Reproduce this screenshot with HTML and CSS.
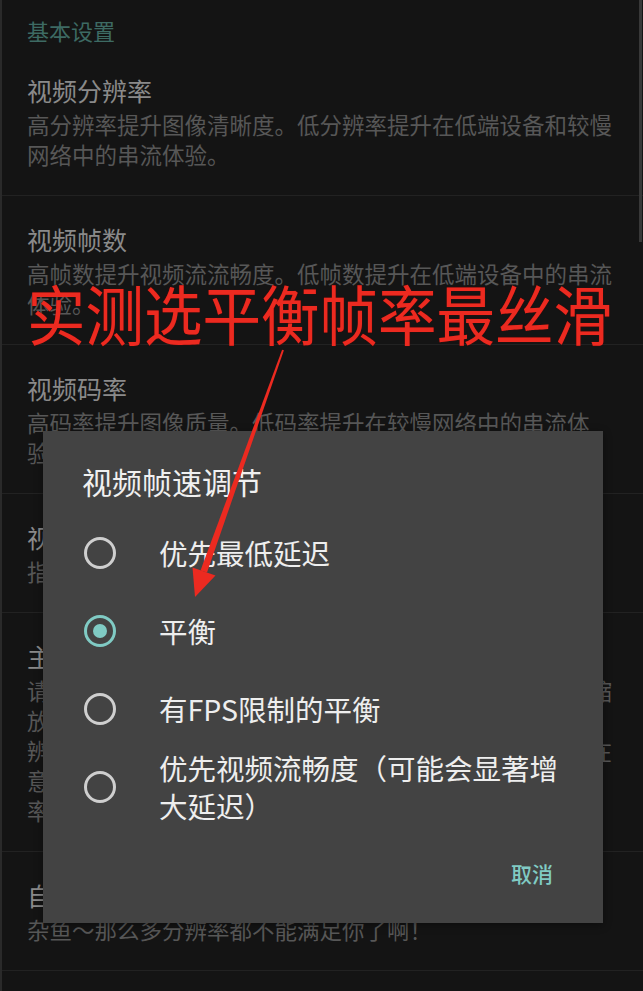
FILE: index.html
```html
<!DOCTYPE html>
<html lang="zh-CN">
<head>
<meta charset="utf-8">
<title>设置</title>
<link rel="stylesheet" href="styles.css">
</head>
<body>
<div class="screen">
  <div class="settings">
    <div class="category">基本设置</div>
    <div class="pref">
      <div class="pref-title">视频分辨率</div>
      <div class="pref-summary">高分辨率提升图像清晰度。低分辨率提升在低端设备和较慢网络中的串流体验。</div>
    </div>
    <div class="pref">
      <div class="pref-title">视频帧数</div>
      <div class="pref-summary">高帧数提升视频流流畅度。低帧数提升在低端设备中的串流体验。</div>
    </div>
    <div class="pref">
      <div class="pref-title">视频码率</div>
      <div class="pref-summary">高码率提升图像质量。低码率提升在较慢网络中的串流体验。</div>
    </div>
    <div class="pref">
      <div class="pref-title">视频帧速调节</div>
      <div class="pref-summary">指定串流时的帧速调节策略</div>
    </div>
    <div class="pref">
      <div class="pref-title">主机端缩放</div>
      <div class="pref-summary">请先确认客户端的解码性能足够，开启后主机端将按比例缩<br>放渲染画面以匹配客户端屏幕，可降低带宽占用。高分<br>辨率下画面更清晰，低分辨率下串流更加流畅。启用后请在<br>意部分应用可能不支持动态调整分辨<br>率，如遇黑屏请降低码率或关闭此选项。</div>
    </div>
    <div class="pref">
      <div class="pref-title">自定义分辨率</div>
      <div class="pref-summary">杂鱼～那么多分辨率都不能满足你了啊！</div>
    </div>
  </div>

  <div class="scrollbar"></div>

  <div class="dialog">
    <div class="dialog-title">视频帧速调节</div>
    <div class="options">
      <div class="option">
        <span class="radio"></span>
        <span class="option-text">优先最低延迟</span>
      </div>
      <div class="option">
        <span class="radio checked"></span>
        <span class="option-text">平衡</span>
      </div>
      <div class="option">
        <span class="radio"></span>
        <span class="option-text">有FPS限制的平衡</span>
      </div>
      <div class="option">
        <span class="radio"></span>
        <span class="option-text">优先视频流畅度（可能会显著增大延迟）</span>
      </div>
    </div>
    <div class="dialog-actions">
      <span class="btn">取消</span>
    </div>
  </div>

  <div class="annotation">实测选平衡帧率最丝滑</div>
  <svg class="arrow" width="643" height="991" viewBox="0 0 643 991">
    <polygon points="283.9,350.3 282.1,349.7 200.5,570.5 207,572.5" fill="#ec2a20"/>
    <polygon points="195,597 192.5,567.5 215.5,575.5" fill="#ec2a20"/>
  </svg>
</div>
</body>
</html>
```

FILE: styles.css
```css
* {
  box-sizing: border-box;
}

html, body {
  margin: 0;
  padding: 0;
  background: #141414;
}

body {
  font-family: "Noto Sans CJK SC", "Noto Sans", sans-serif;
}

.screen {
  position: relative;
  width: 643px;
  height: 991px;
  overflow: hidden;
  background: #141414;
  border-left: 2px solid #2a2a2a;
}

.settings {
  display: flex;
  flex-direction: column;
}

.category {
  padding: 15px 0 0 25px;
  height: 47px;
  font-size: 22px;
  line-height: 30px;
  color: #3d6a63;
}

.pref {
  padding: 29px 24px 26px 25px;
  border-bottom: 1px solid #222222;
}

.pref-title {
  font-size: 25px;
  line-height: 28px;
  margin-bottom: 5px;
  color: #8a8a8a;
}

.pref-summary {
  font-size: 22.5px;
  line-height: 30px;
  color: #575757;
}

.scrollbar {
  position: absolute;
  top: 0;
  right: 1px;
  width: 3px;
  height: 242px;
  background: #383838;
}

.dialog {
  position: absolute;
  top: 431px;
  left: 41px;
  width: 560px;
  background: #434343;
  padding: 32px 0 30px 0;
  box-shadow: 0 2px 8px rgba(0, 0, 0, 0.4);
}

.dialog-title {
  margin-left: 39px;
  font-size: 30px;
  line-height: 36px;
  color: #f0f0f0;
}

.options {
  margin-top: 15px;
  display: flex;
  flex-direction: column;
}

.option {
  display: flex;
  align-items: center;
  min-height: 78px;
  padding: 0 30px 0 41px;
}

.radio {
  flex: none;
  width: 32px;
  height: 32px;
  border-radius: 50%;
  border: 3px solid #cfcfcf;
  margin-right: 43px;
  display: flex;
  align-items: center;
  justify-content: center;
}

.radio.checked {
  border-color: #80cbc4;
}

.radio.checked::after {
  content: "";
  width: 14px;
  height: 14px;
  border-radius: 50%;
  background: #80cbc4;
}

.option-text {
  font-size: 28.5px;
  line-height: 38px;
  color: #eeeeee;
}

.dialog-actions {
  margin-top: 27px;
  display: flex;
  justify-content: flex-end;
  padding-right: 50px;
}

.btn {
  font-size: 21px;
  line-height: 40px;
  font-weight: 500;
  color: #80cbc4;
}

.annotation {
  position: absolute;
  left: 25px;
  top: 282px;
  font-size: 58.5px;
  line-height: 60px;
  color: #ec2a20;
  white-space: nowrap;
  text-shadow: 0 0 1px #7a0a06;
  transform: scaleY(1.1);
  transform-origin: center;
}

.arrow {
  position: absolute;
  left: -2px;
  top: 0;
}
```
